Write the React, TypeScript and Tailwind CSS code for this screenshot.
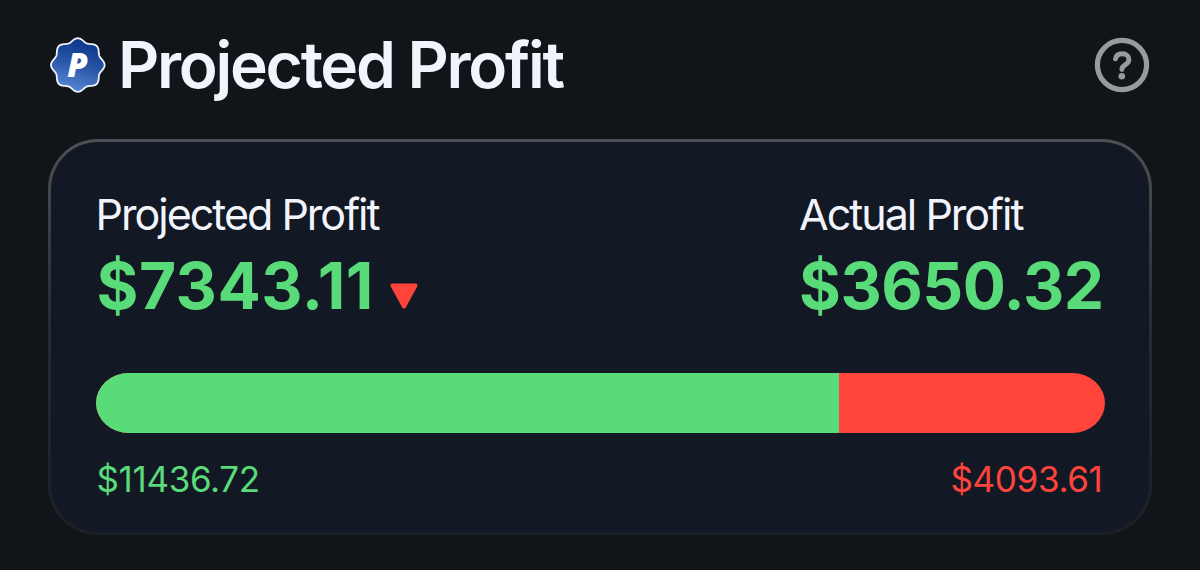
import React from 'react';

const income = 11436.72;
const expenses = 4093.61;
const incomeShare = (income / (income + expenses)) * 100;

function Badge() {
  // rounded seal with eight lobes
  const points: string[] = [];
  for (let i = 0; i <= 160; i++) {
    const a = (i / 160) * Math.PI * 2;
    const r = 25.1 + 1.7 * Math.cos(8 * a);
    points.push(`${(27.8 + r * Math.cos(a)).toFixed(2)} ${(28 + r * Math.sin(a)).toFixed(2)}`);
  }

  return (
    <svg width="56" height="56" viewBox="0 0 56 56" className="shrink-0">
      <defs>
        <linearGradient id="badge-fill" x1="0.65" y1="0" x2="0.35" y2="1">
          <stop offset="0.1" stopColor="#0f3a8c" />
          <stop offset="0.5" stopColor="#2a56a8" />
          <stop offset="1" stopColor="#5c8ad6" />
        </linearGradient>
      </defs>
      <path d={`M${points.join('L')}Z`} fill="url(#badge-fill)" stroke="#edf3fc" strokeWidth="1.8" strokeLinejoin="round" />
      <text x="27.5" y="40" textAnchor="middle" fill="#fff" className="font-['Open_Sans',sans-serif] text-[33px] font-extrabold italic">
        P
      </text>
    </svg>
  );
}

function HelpIcon() {
  return (
    <svg width="56" height="56" viewBox="0 0 56 56" fill="none" className="shrink-0">
      <circle cx="28" cy="28" r="24.6" stroke="#999a9e" strokeWidth="5.2" />
      <path d="M21.5 21.8C22.2 18.4 24.8 16.8 28.1 16.8C32.1 16.8 34.9 19 34.9 22.5C34.9 25 33.5 26.4 31.2 27.8C28.8 29.2 27.9 30.2 27.9 32.6" stroke="#999a9e" strokeWidth="4.9" strokeLinecap="round" strokeLinejoin="round" />
      <circle cx="27.8" cy="39.3" r="3.3" fill="#999a9e" />
    </svg>
  );
}

function DownArrow() {
  return (
    <svg width="28" height="26" viewBox="0 0 28 26">
      <path d="M2.5 2.5H25.5L14 23.5Z" fill="#ff443c" stroke="#ff443c" strokeWidth="4" strokeLinejoin="round" />
    </svg>
  );
}

export default function App() {
  return (
    <div className="h-[570px] w-[1200px] bg-[#111418] px-12 pt-9 font-['Inter',sans-serif] text-[#f2f4fc]">
      <header className="flex h-[58px] items-center justify-between pr-0.5 pl-0.5">
        <div className="flex items-center gap-3">
          <Badge />
          <h1 className="pb-px text-[64px] leading-[57px] font-semibold tracking-[-2.25px] whitespace-nowrap">Projected Profit</h1>
        </div>
        <HelpIcon />
      </header>

      <section className="mt-[45px] h-[396px] rounded-[50px] bg-linear-to-b from-[#505154] via-[#2a2c32] via-45% to-[#1b1f27] p-[3px]">
        <div className="h-full rounded-[47px] bg-[#131924] px-[44.5px] pt-12">
          <div className="flex justify-between">
            <div>
              <div className="text-[43px] leading-[49px] tracking-[-2px] whitespace-nowrap">Projected Profit</div>
              <div className="mt-[15px] flex items-end gap-4 pl-px">
                <span className="text-[64px] leading-[64px] font-bold tracking-[0.5px] text-[#59db79]">$7343.11</span>
                <div className="pb-[9px]">
                  <DownArrow />
                </div>
              </div>
            </div>
            <div className="pr-px">
              <div className="text-[43px] leading-[49px] tracking-[-2px] whitespace-nowrap">Actual Profit</div>
              <div className="mt-[15px] text-[64px] leading-[64px] font-bold tracking-[-0.5px] text-[#59db79]">$3650.32</div>
            </div>
          </div>

          <div className="mt-[55px] flex h-[60px] overflow-hidden rounded-[33px_/_30px] bg-[#ff443c]">
            <div className="bg-[#59db79]" style={{ width: `${incomeShare}%` }} />
          </div>

          <div className="mt-[26px] flex justify-between pr-0.5 pl-px text-[35px] leading-10 tracking-[-0.35px]">
            <span className="text-[#59db79]">${income}</span>
            <span className="text-[#ff443c]">${expenses}</span>
          </div>
        </div>
      </section>
    </div>
  );
}
